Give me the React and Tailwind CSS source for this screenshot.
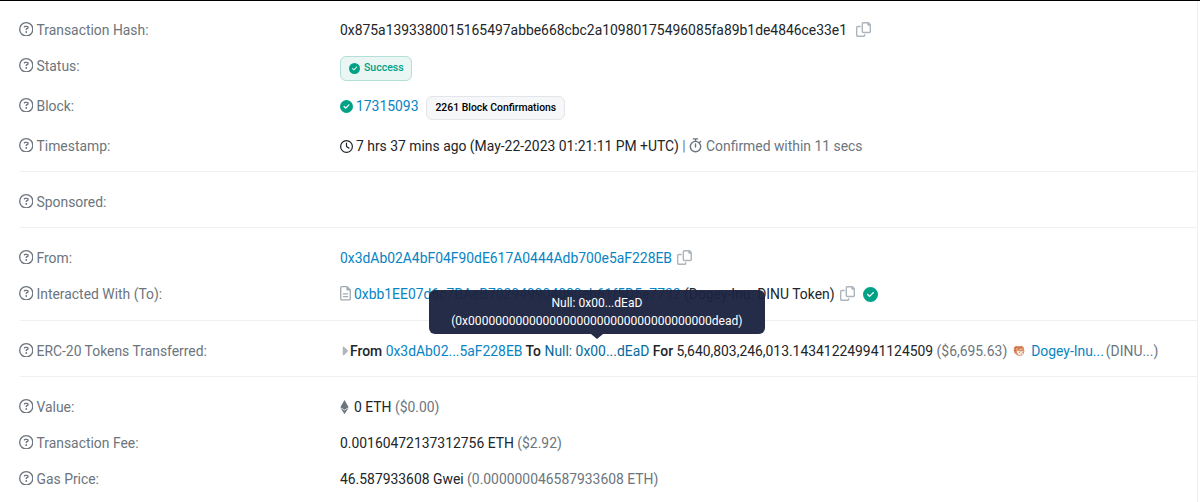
import { FaRegCircleQuestion, FaRegClock, FaCircleCheck, FaRegFileLines, FaEthereum, FaCaretRight } from "react-icons/fa6";

function Copy({ className = "" }) {
  return (
    <svg viewBox="0 0 512 512" fill="currentColor" className={`mb-px size-[15px] shrink-0 text-[#adb5bd] ${className}`}>
      <path d="M502.6 70.63l-61.25-61.25C435.4 3.371 427.2 0 418.7 0H255.1c-35.35 0-64 28.66-64 64l.0195 256C192 355.4 220.7 384 256 384h192c35.2 0 64-28.8 64-64V93.25C512 84.77 508.6 76.63 502.6 70.63zM464 320c0 8.836-7.164 16-16 16H255.1c-8.838 0-16-7.164-16-16L239.1 64.13c0-8.836 7.164-16 16-16h128L384 96c0 17.67 14.33 32 32 32h47.1V320zM272 448c0 8.836-7.164 16-16 16H63.1c-8.838 0-16-7.164-16-16L47.98 192.1c0-8.836 7.164-16 16-16H160V128H63.99c-35.35 0-64 28.65-64 64l.0098 256C.002 483.3 28.66 512 64 512h192c35.2 0 64-28.8 64-64v-32h-47.1L272 448z" />
    </svg>
  );
}

function Stopwatch() {
  return (
    <svg viewBox="0 0 13 15" fill="none" stroke="currentColor" strokeWidth="1.4" strokeLinecap="round" className="mr-1 mb-px h-[15px] w-[13px] shrink-0 text-[#6c757d]">
      <circle cx="6.5" cy="8.6" r="5.2" />
      <path d="M4.4 .9h4.2M6.5 1v2.2M6.5 6v3M10.4 4.6l1.2-1.2" />
    </svg>
  );
}

function TokenLogo() {
  return (
    <svg viewBox="0 0 12 12" className="ml-[6px] size-3 shrink-0">
      <path d="M1 2.2 3 .8 6 1.2 9 .8 10.8 2.5 11.4 6 10.6 9 8 11 4.4 10.6 1.4 8 .6 5Z" fill="#dc8d62" />
      <path d="M3.6 6.4 5.4 5.4 7.2 6.4 10.2 6 10 9 7.6 10.4 5 9.4Z" fill="#fbeee4" />
      <path d="M2 3.6 3.6 2.4M4.6 3.6 6.4 2.4M7.4 3.4 9 2.6M1.6 6 3.2 5M6.2 7.3h.8M9 7.3h.8M7.6 9h1" stroke="#a04a28" strokeWidth=".8" fill="none" />
      <path d="M2.8 4.4 4.6 3.8M6.6 4.4 9.4 4" stroke="#f8dcc8" strokeWidth=".8" fill="none" />
    </svg>
  );
}

function Row({ label, height, children }) {
  return (
    <div className={`flex items-center ${height}`}>
      <div className="flex w-[321.5px] shrink-0 items-center text-[#6c757d]">
        <FaRegCircleQuestion className="mr-[3.5px] mb-[2px] size-[14.5px] shrink-0" />
        {label}
      </div>
      <div className="flex items-center">{children}</div>
    </div>
  );
}

function Line() {
  return <div className="ml-px h-px bg-[#eff0f2]" />;
}

export default function App() {
  return (
    <div className="h-[502px] w-[1200px] overflow-hidden border-t border-black bg-white font-['Roboto',sans-serif] text-[13.9px] leading-[22px] whitespace-pre text-[#212529]">
      <div className="mr-[2px] h-full border-r border-[#eeeff1] pt-[11px] pl-[18.5px]">
        <Row label="Transaction Hash:" height="h-9">
          0x875a1393380015165497abbe668cbc2a10980175496085fa89b1de4846ce33e1
          <Copy className="ml-[9px]" />
        </Row>
        <Row label="Status:" height="h-9">
          <div className="mt-1 flex h-[25px] items-center rounded-md border border-[#b3e0d6] bg-[#e9f6f3] pr-[7px] pl-2 text-[10.5px] font-medium text-[#00a186]">
            <FaCircleCheck className="mr-1 size-[11px]" />
            Success
          </div>
        </Row>
        <Row label="Block:" height="h-11">
          <FaCircleCheck className="mr-[3px] size-[13px] text-[#00a186]" />
          <span className="text-[#0784c3]">17315093</span>
          <div className="ml-2 mt-[3px] flex h-6 items-center rounded-md border border-[#e3e5e8] bg-[#f6f7f8] px-2 text-[10.4px] font-medium text-black">
            2261 Block Confirmations
          </div>
        </Row>
        <Row label="Timestamp:" height="h-9">
          <FaRegClock className="mr-[3px] size-[13px]" />
          7 hrs 37 mins ago (May-22-2023 01:21:11 PM +UTC)
          <span className="text-[#6c757d]"> | </span>
          <Stopwatch />
          <span className="text-[#6c757d]">Confirmed within 11 secs</span>
        </Row>
        <div className="h-[7px]" />
        <Line />
        <div className="h-3" />
        <Row label="Sponsored:" height="h-9" />
        <div className="h-[7px]" />
        <Line />
        <div className="h-3" />
        <Row label="From:" height="h-9">
          <span className="text-[#0784c3]">0x3dAb02A4bF04F90dE617A0444Adb700e5aF228EB</span>
          <Copy className="ml-[5px]" />
        </Row>
        <Row label="Interacted With (To):" height="h-9">
          <FaRegFileLines className="mr-[3px] mb-px h-[14.5px] w-[11px] text-[#a3abb3]" />
          <span className="text-[#0784c3]">0xbb1EE07d6c7BAeB702949904080eb61f5D5e7732</span>
          <span> (Dogey-Inu: DINU Token)</span>
          <Copy className="ml-[5px]" />
          <FaCircleCheck className="ml-2 size-[15px] text-[#00a186]" />
        </Row>
        <div className="h-2" />
        <Line />
        <div className="h-3" />
        <Row label="ERC-20 Tokens Transferred:" height="h-9">
          <FaCaretRight className="mr-[2px] ml-px h-[14px] w-[7px] text-[#adb5bd]" />
          <span className="font-medium">From </span>
          <span className="text-[#0784c3]">0x3dAb02...5aF228EB</span>
          <span className="font-medium"> To </span>
          <div className="relative text-[#066a9c]">
            Null: 0x00...dEaD
            <div className="absolute bottom-[28px] left-1/2 z-10 h-[44px] w-[336px] -translate-x-1/2">
              <div className="flex h-full flex-col items-center justify-center rounded-md bg-[#1c2340]/96 text-[12.05px] leading-[18px] text-white">
                <div>Null: 0x00...dEaD</div>
                <div>(0x000000000000000000000000000000000000dead)</div>
              </div>
              <div className="mx-auto h-0 w-0 border-x-[6px] border-t-[5px] border-x-transparent border-t-[#232a46]" />
            </div>
          </div>
          <span className="font-medium"> For </span>
          5,640,803,246,013.143412249941124509
          <span className="text-[#6c757d]"> ($6,695.63)</span>
          <TokenLogo />
          <span className="ml-[6px] text-[#0784c3]">Dogey-Inu...</span>
          <span className="ml-[2px] text-[#6c757d]">(DINU...)</span>
        </Row>
        <div className="h-[7px]" />
        <Line />
        <div className="h-3" />
        <Row label="Value:" height="h-9">
          <FaEthereum className="mr-[5px] mb-px h-[14px] w-[9px] text-[#6c757d]" />
          0 ETH<span className="text-[#6c757d]"> ($0.00)</span>
        </Row>
        <Row label="Transaction Fee:" height="h-9">
          0.00160472137312756 ETH<span className="text-[#6c757d]"> ($2.92)</span>
        </Row>
        <Row label="Gas Price:" height="h-9">
          46.587933608 Gwei<span className="text-[#6c757d]"> (0.000000046587933608 ETH)</span>
        </Row>
      </div>
    </div>
  );
}
